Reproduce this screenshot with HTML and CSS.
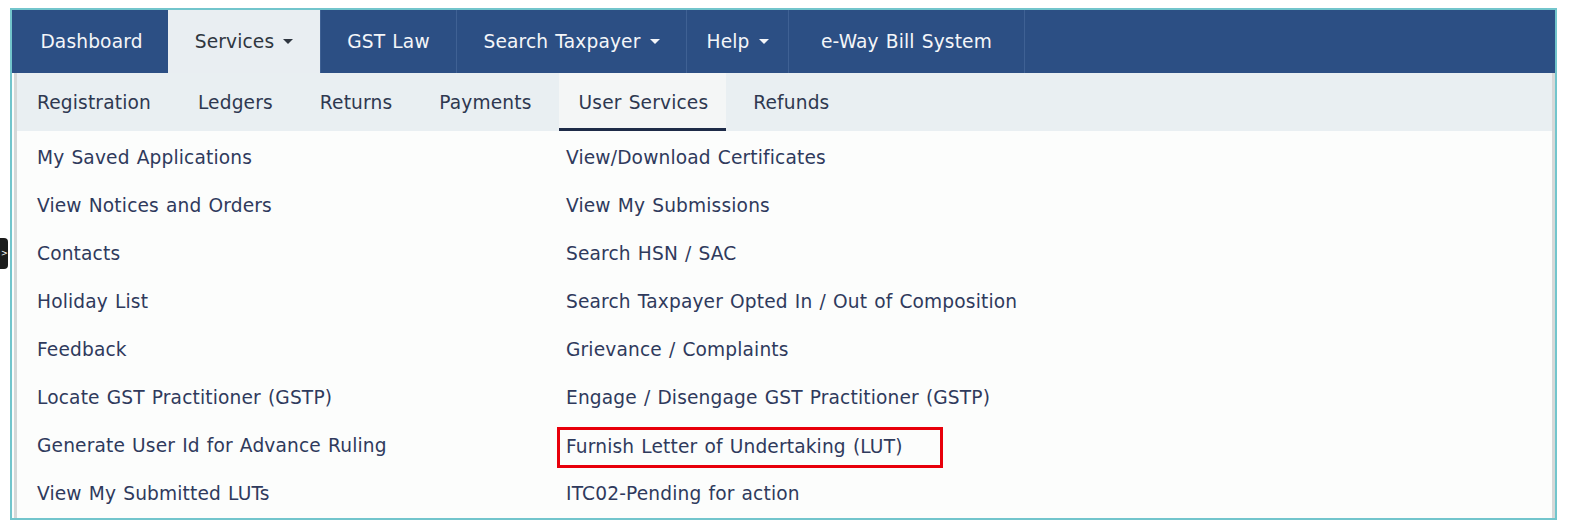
FILE: index.html
```html
<!DOCTYPE html>
<html>
<head>
<meta charset="utf-8">
<link rel="stylesheet" href="styles.css">
</head>
<body>
<div class="side-toggle">&gt;</div>
<div class="frame">
  <nav class="topnav">
    <a class="tab t-dash">Dashboard</a>
    <a class="tab t-serv active">Services <span class="caret"></span></a>
    <a class="tab t-law sep">GST Law</a>
    <a class="tab t-search sep">Search Taxpayer <span class="caret"></span></a>
    <a class="tab t-help sep">Help <span class="caret"></span></a>
    <a class="tab t-eway sep last">e-Way Bill System</a>
  </nav>
  <div class="panel">
    <ul class="subnav">
      <li class="sub">Registration</li>
      <li class="sub">Ledgers</li>
      <li class="sub">Returns</li>
      <li class="sub">Payments</li>
      <li class="sub current">User Services</li>
      <li class="sub">Refunds</li>
    </ul>
    <div class="list">
      <div class="col">
        <div class="row"><a class="link">My Saved Applications</a></div>
        <div class="row"><a class="link">View Notices and Orders</a></div>
        <div class="row"><a class="link">Contacts</a></div>
        <div class="row"><a class="link">Holiday List</a></div>
        <div class="row"><a class="link">Feedback</a></div>
        <div class="row"><a class="link">Locate GST Practitioner (GSTP)</a></div>
        <div class="row"><a class="link">Generate User Id for Advance Ruling</a></div>
        <div class="row"><a class="link">View My Submitted LUTs</a></div>
      </div>
      <div class="col">
        <div class="row"><a class="link">View/Download Certificates</a></div>
        <div class="row"><a class="link">View My Submissions</a></div>
        <div class="row"><a class="link">Search HSN / SAC</a></div>
        <div class="row"><a class="link">Search Taxpayer Opted In / Out of Composition</a></div>
        <div class="row"><a class="link">Grievance / Complaints</a></div>
        <div class="row"><a class="link">Engage / Disengage GST Practitioner (GSTP)</a></div>
        <div class="row"><a class="link marked">Furnish Letter of Undertaking (LUT)</a></div>
        <div class="row"><a class="link">ITC02-Pending for action</a></div>
      </div>
    </div>
  </div>
</div>
</body>
</html>
```

FILE: styles.css
```css
* { box-sizing: border-box; }
html, body { margin: 0; padding: 0; background: #ffffff; }
body {
  font-family: "DejaVu Sans", Verdana, sans-serif;
  font-size: 18.6px;
  letter-spacing: 0.15px;
  word-spacing: 1px;
  position: relative;
  height: 532px;
  overflow: hidden;
}
.side-toggle {
  position: absolute;
  left: 0;
  top: 238px;
  width: 8px;
  height: 31px;
  background: #1c1c1c;
  border-radius: 0 4px 4px 0;
  color: #fff;
  font-size: 8px;
  line-height: 31px;
  text-align: left;
  overflow: hidden;
  padding-left: 1px;
}
.frame {
  margin: 8px 0 0 10px;
  width: 1547px;
  height: 512px;
  border: 2px solid #72c5cc;
  display: flex;
  flex-direction: column;
  background: #fcfdfc;
}
.topnav {
  height: 63px;
  flex: none;
  display: flex;
  background: #2c4f84;
}
.tab {
  display: flex;
  align-items: center;
  justify-content: center;
  color: #f4f6f9;
  white-space: nowrap;
  flex: none;
}
.t-dash { width: 156px; padding-left: 3px; }
.t-serv { width: 152px; }
.t-law { width: 136px; }
.t-search { width: 230px; }
.t-help { width: 102px; }
.t-eway { width: 237px; }
.tab.active { background: #e9eef2; color: #2f3640; }
.tab.sep { border-left: 1px solid #3f6194; }
.tab.last { border-right: 1px solid #3f6194; }
.caret {
  display: inline-block;
  width: 0;
  height: 0;
  margin-left: 9px;
  border-left: 5px solid transparent;
  border-right: 5px solid transparent;
  border-top: 5px solid currentColor;
  vertical-align: middle;
}
.panel {
  flex: 1;
  margin-left: 2px;
  border-left: 3px solid #d6d8d8;
  border-right: 3px solid #d6d8d8;
  display: flex;
  flex-direction: column;
}
.subnav {
  list-style: none;
  margin: 0;
  padding: 0;
  height: 58px;
  flex: none;
  display: flex;
  gap: 7px;
  background: #e9eff2;
}
.sub {
  display: flex;
  align-items: center;
  padding: 0 20px;
  color: #2e3850;
  border-bottom: 3px solid transparent;
  padding-top: 3px;
}
.sub.current {
  background: #f4f6f6;
  border-bottom-color: #1e2b48;
  padding-right: 18px;
}
.list {
  flex: 1;
  display: grid;
  grid-template-columns: 529px 1fr;
  padding-top: 2px;
  background: #fcfdfc;
}
.col { padding-left: 20px; display: flex; flex-direction: column; }
.row {
  height: 48.1px;
  display: flex;
  align-items: center;
}
.link {
  color: #2f3a5c;
  white-space: nowrap;
}
.link.marked {
  border: 3px solid #e8000b;
  padding: 0 37px 0 6px;
  margin-left: -9px;
  height: 41px;
  line-height: 33px;
  margin-top: 4px;
}
```
